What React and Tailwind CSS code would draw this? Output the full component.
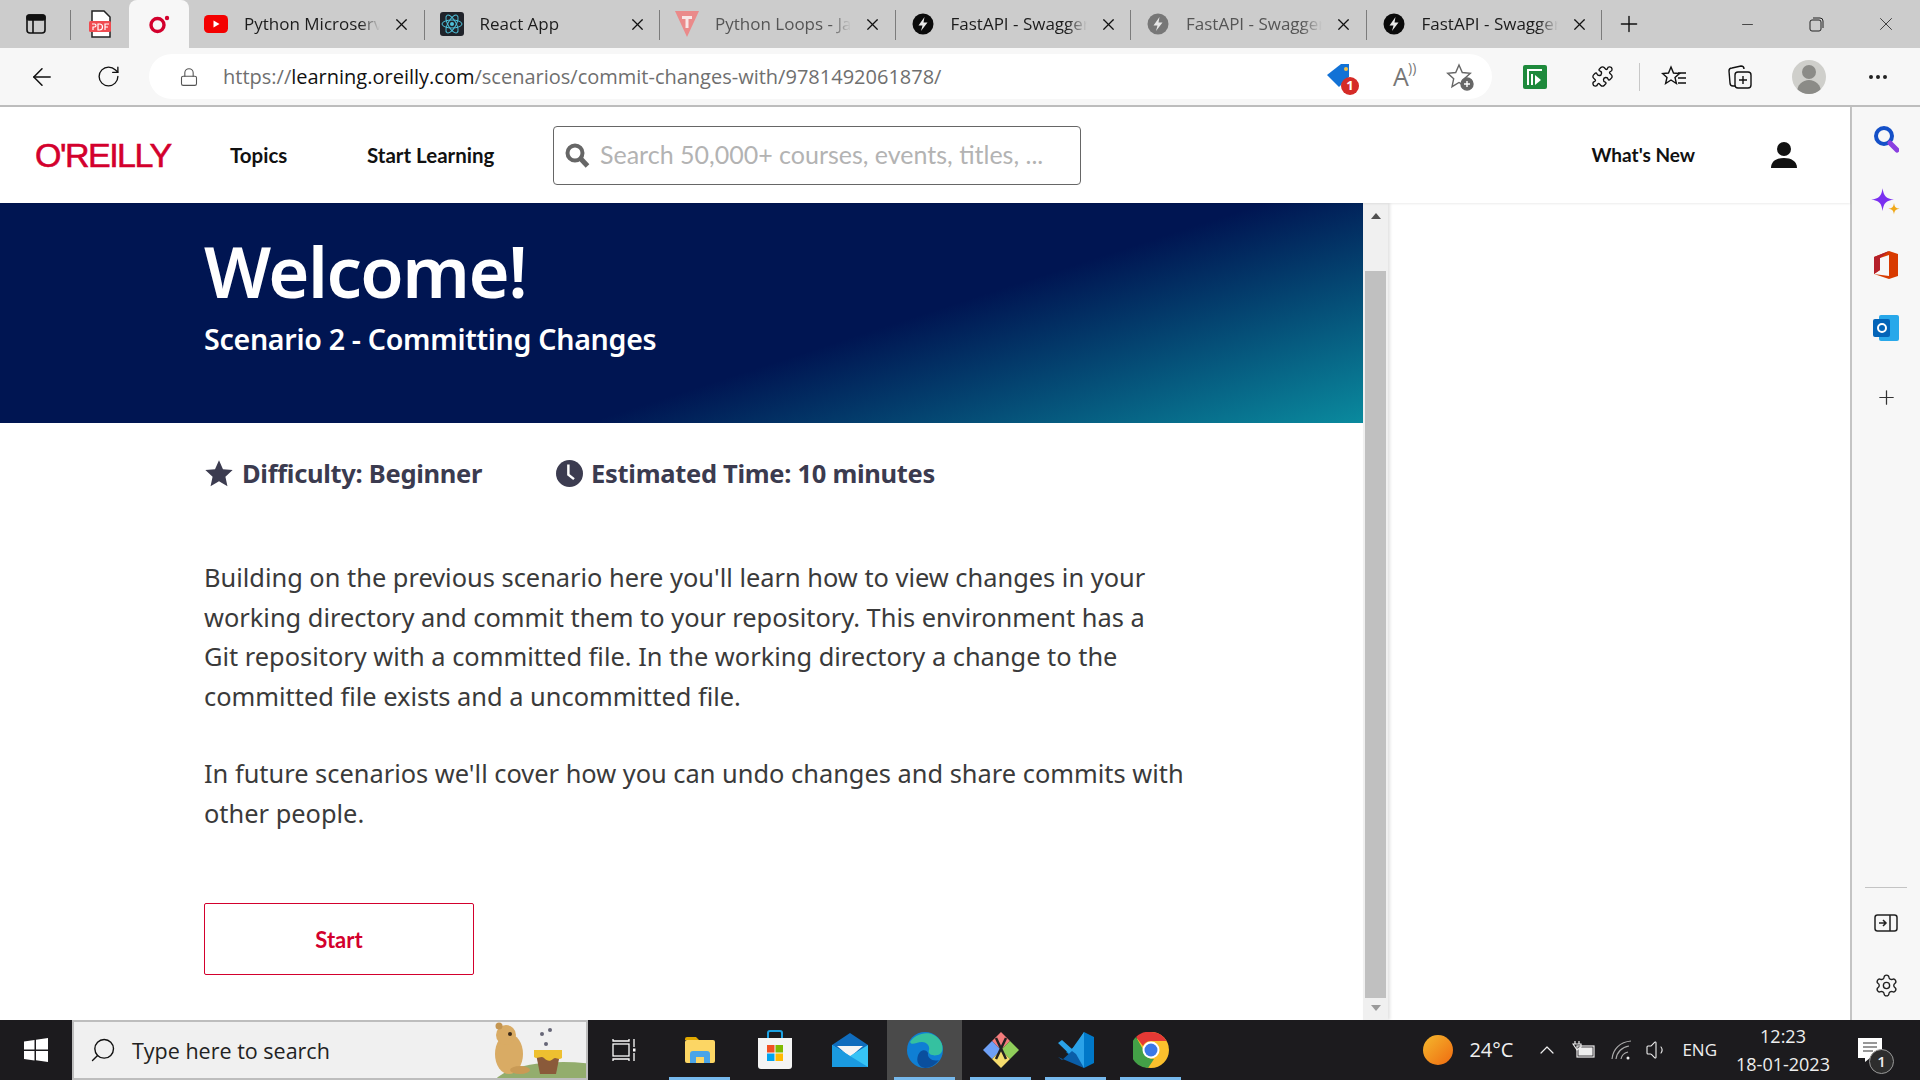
import React from "react";
import { ArrowLeft, RotateCw, Lock, X, Plus, Minus, Puzzle, MoreHorizontal, ChevronUp, Settings, Search, Volume1 } from "lucide-react";

const ui = { fontFamily: '"Open Sans", "Noto Sans", sans-serif' };
const body = { fontFamily: '"Noto Sans", "Open Sans", sans-serif' };
const nav = { fontFamily: 'Lato, "Open Sans", sans-serif' };

function PanelIcon() {
  return (
    <svg width="22" height="22" viewBox="0 0 22 22" fill="none" stroke="#111" strokeWidth="1.6">
      <rect x="2" y="2" width="18" height="18" rx="3" />
      <rect x="2" y="2" width="18" height="5" rx="2" fill="#111" />
      <path d="M8 7v13" />
    </svg>
  );
}

function PdfIcon() {
  return (
    <svg width="24" height="28" viewBox="0 0 24 28">
      <path d="M4 1h12l6 6v20H4z" fill="#fff" stroke="#222" strokeWidth="1.5" />
      <rect x="1" y="11" width="22" height="11" rx="1.5" fill="#f04b50" />
      <path d="M4 14h2.5a1.5 1.5 0 0 1 0 3H5v3M10 14v6h1.5a3 3 0 0 0 0-6zM17 20v-6h4M17 17h3" fill="none" stroke="#fff" strokeWidth="1.2" />
    </svg>
  );
}

function OreillyFav() {
  return (
    <svg width="24" height="24" viewBox="0 0 24 24" fill="none">
      <circle cx="10.5" cy="13" r="6.5" stroke="#d3002d" strokeWidth="3.4" />
      <circle cx="20" cy="6" r="2.2" fill="#d3002d" />
    </svg>
  );
}

function YoutubeFav() {
  return (
    <svg width="24" height="18" viewBox="0 0 24 18">
      <rect width="24" height="18" rx="4.5" fill="#f40000" />
      <path d="M9.5 5.5v7l6-3.5z" fill="#fff" />
    </svg>
  );
}

function ReactFav() {
  return (
    <svg width="24" height="24" viewBox="0 0 24 24" fill="none" stroke="#4fc3dc" strokeWidth="1">
      <rect width="24" height="24" rx="3" fill="#20232a" stroke="none" />
      <ellipse cx="12" cy="12" rx="10" ry="4" />
      <ellipse cx="12" cy="12" rx="10" ry="4" transform="rotate(60 12 12)" />
      <ellipse cx="12" cy="12" rx="10" ry="4" transform="rotate(120 12 12)" />
      <circle cx="12" cy="12" r="2" fill="#4fc3dc" stroke="none" />
    </svg>
  );
}

function TpointFav() {
  return (
    <svg width="24" height="28" viewBox="0 0 24 28">
      <path d="M0 1h24L12 27z" fill="#ea8a8a" />
      <path d="M7 6h10v3h-3.5v9h-3V9H7z" fill="#f8e6e6" />
    </svg>
  );
}

function BoltFav({ color = "#0a0a0a" }) {
  return (
    <svg width="22" height="22" viewBox="0 0 22 22">
      <circle cx="11" cy="11" r="10.5" fill={color} />
      <path d="M12.5 4 6.5 12.5h4L9 18l6.5-8.5h-4z" fill="#e8e8e8" />
    </svg>
  );
}

function Tab({ icon, title, faded }) {
  return (
    <div className="w-[235.5px] h-full flex items-center relative shrink-0">
      <div className="w-[24px] ml-[15px] flex justify-center shrink-0">{icon}</div>
      <div className={`ml-[16px] w-[136px] overflow-hidden whitespace-nowrap text-[17px] ${faded ? "text-[#555]" : "text-[#1c1c1c]"} [mask-image:linear-gradient(to_right,#000_85%,transparent)]`} style={ui}>
        {title}
      </div>
      <X size={19} strokeWidth={1.5} className="ml-[12px] text-[#111] shrink-0" />
      <div className="absolute right-0 top-[10px] w-[1px] h-[30px] bg-[#7c7c7c]" />
    </div>
  );
}

function TabStrip() {
  return (
    <div className="h-[48px] bg-[#cccccc] flex shrink-0">
      <div className="w-[71px] h-full flex items-center pl-[25px] relative">
        <PanelIcon />
        <div className="absolute right-0 top-[10px] w-[1px] h-[30px] bg-[#7c7c7c]" />
      </div>
      <div className="w-[58px] h-full flex items-center justify-center">
        <PdfIcon />
      </div>
      <div className="w-[60px] h-[48px] bg-[#f7f7f7] rounded-t-[8px] flex items-center justify-center z-10">
        <OreillyFav />
      </div>
      <Tab icon={<YoutubeFav />} title="Python Microservices" />
      <Tab icon={<ReactFav />} title="React App" />
      <Tab icon={<TpointFav />} title="Python Loops - Javatpoint" faded />
      <Tab icon={<BoltFav />} title="FastAPI - Swagger UI" />
      <Tab icon={<BoltFav color="#777" />} title="FastAPI - Swagger UI" faded />
      <Tab icon={<BoltFav />} title="FastAPI - Swagger UI" />
      <div className="w-[54px] flex items-center justify-center">
        <Plus size={26} strokeWidth={1.3} className="text-[#111]" />
      </div>
      <div className="flex-1 flex items-center justify-end text-[#222]">
        <div className="w-[69px] flex justify-center"><Minus size={17} strokeWidth={1.1} /></div>
        <div className="w-[69px] flex justify-center">
          <svg width="15" height="15" viewBox="0 0 15 15" fill="none" stroke="#222" strokeWidth="1">
            <rect x="1" y="3" width="11" height="11" rx="2" />
            <path d="M4 1h7a3 3 0 0 1 3 3v7" />
          </svg>
        </div>
        <div className="w-[69px] flex justify-center"><X size={22} strokeWidth={0.9} /></div>
      </div>
    </div>
  );
}

function TagBadge() {
  return (
    <div className="relative w-[30px] h-[30px]">
      <svg width="30" height="30" viewBox="0 0 30 30">
        <path d="M15 2h8v13l-10 10L1 13z" fill="#1272d6" />
        <circle cx="20" cy="7" r="2" fill="#f4c14a" />
      </svg>
      <div className="absolute right-[-3px] bottom-[-3px] w-[18px] h-[18px] rounded-full bg-[#d52b27] text-white text-[13px] font-bold flex items-center justify-center" style={ui}>1</div>
    </div>
  );
}

function ToolIcon({ children, className = "" }) {
  return <div className={`flex items-center justify-center ${className}`}>{children}</div>;
}

function Toolbar() {
  return (
    <div className="h-[57px] bg-[#f7f7f7] flex items-center shrink-0">
      <ToolIcon className="w-[84px]"><ArrowLeft size={28} strokeWidth={1.3} className="text-[#111]" /></ToolIcon>
      <ToolIcon className="w-[48px]"><RotateCw size={25} strokeWidth={1.3} className="text-[#111]" /></ToolIcon>
      <div className="ml-[17px] w-[1343px] h-[45px] bg-white rounded-full flex items-center">
        <Lock size={20} strokeWidth={1.3} className="ml-[30px] text-[#555]" />
        <div className="ml-[24px] text-[20px] text-[#6f6f6f] whitespace-nowrap" style={ui}>
          https://<span className="text-[#111]">learning.oreilly.com</span>/scenarios/commit-changes-with/9781492061878/
        </div>
        <div className="flex-1" />
        <TagBadge />
        <div className="ml-[37px] w-[26px] text-[#777] relative text-[25px] leading-none" style={ui}>
          A
          <span className="absolute left-[15px] top-[-3px] text-[14px]">))</span>
        </div>
        <svg className="ml-[27px] mr-[18px]" width="28" height="28" viewBox="0 0 28 28" fill="none" stroke="#666" strokeWidth="1.4">
          <path d="M13 2l3.3 7.5 8 .8-6 5.4 1.7 8-7-4.2-7 4.2 1.7-8-6-5.4 8-.8z" />
          <circle cx="21" cy="21" r="6" fill="#666" />
          <path d="M21 18v6M18 21h6" stroke="#fff" />
        </svg>
      </div>
      <ToolIcon className="w-[86px]">
        <svg width="24" height="24" viewBox="0 0 24 24">
          <rect width="24" height="24" rx="2" fill="#1e8a3c" />
          <path d="M5 20V5h14M9 20V9" fill="none" stroke="#fff" strokeWidth="2" />
          <path d="M12 10l6 5-6 5z" fill="#fff" />
        </svg>
      </ToolIcon>
      <ToolIcon className="ml-[13px] w-[23px]"><Puzzle size={27} strokeWidth={1.4} className="text-[#111]" /></ToolIcon>
      <div className="ml-[25px] w-[1px] h-[28px] bg-[#c8c8c8]" />
      <ToolIcon className="ml-[16px] w-[36px]">
        <svg width="26" height="26" viewBox="0 0 26 26" fill="none" stroke="#111" strokeWidth="1.4">
          <path d="M10 3l2.5 6 6 .5-4.5 4 1.4 6L10 16l-5.4 3.5 1.4-6-4.5-4 6-.5z" />
          <path d="M17 9h8M17 14h8M17 19h8" />
        </svg>
      </ToolIcon>
      <ToolIcon className="ml-[30px] w-[36px]">
        <svg width="26" height="26" viewBox="0 0 26 26" fill="none" stroke="#111" strokeWidth="1.4">
          <path d="M8 22H6a3 3 0 0 1-3-3L2 7a3 3 0 0 1 3-3l9-2a3 3 0 0 1 3 3" />
          <rect x="8" y="8" width="16" height="16" rx="3" />
          <path d="M16 12v8M12 16h8" />
        </svg>
      </ToolIcon>
      <ToolIcon className="ml-[33px] w-[36px]">
        <div className="w-[34px] h-[34px] rounded-full bg-[#cfcfcb] overflow-hidden flex flex-col items-center">
          <div className="w-[14px] h-[17px] rounded-full bg-[#8b8b87] mt-[5px]" />
          <div className="w-[24px] h-[16px] rounded-t-full bg-[#8b8b87] mt-[1px]" />
        </div>
      </ToolIcon>
      <ToolIcon className="ml-[33px] w-[36px]"><MoreHorizontal size={24} strokeWidth={2} className="text-[#222]" /></ToolIcon>
    </div>
  );
}

function Logo() {
  return (
    <div className="ml-[35px] w-[137px] text-[#d3002d] text-[34px] leading-none tracking-[-1.5px] whitespace-nowrap [-webkit-text-stroke:0.6px_#d3002d]" style={{ fontFamily: '"Liberation Sans", sans-serif' }}>
      O'REILLY
    </div>
  );
}

function SiteHeader() {
  return (
    <div className="h-[96px] bg-white flex items-center shrink-0 shadow-[0_1px_2px_rgba(0,0,0,0.08)] z-10" style={nav}>
      <Logo />
      <div className="ml-[58px] text-[20.5px] font-bold text-[#111] w-[137px]">Topics</div>
      <div className="text-[20.5px] font-bold text-[#111] w-[186px] whitespace-nowrap">Start Learning</div>
      <div className="w-[528px] h-[59px] border border-[#666] rounded-[4px] flex items-center">
        <svg className="ml-[11px]" width="25" height="25" viewBox="0 0 25 25" fill="none" stroke="#666">
          <circle cx="10" cy="10" r="7.5" strokeWidth="4" />
          <path d="M15.5 15.5l7 7.5" strokeWidth="5" />
        </svg>
        <div className="ml-[10px] text-[25px] text-[#b3b3b3] whitespace-nowrap">Search 50,000+ courses, events, titles, ...</div>
      </div>
      <div className="ml-auto text-[19px] font-bold text-[#111] whitespace-nowrap">What's New</div>
      <div className="ml-[75px] mr-[52px]">
        <svg width="28" height="28" viewBox="0 0 28 28" fill="#111">
          <circle cx="14" cy="8" r="7" />
          <path d="M1 27c0-7 6-10 13-10s13 3 13 10z" />
        </svg>
      </div>
    </div>
  );
}

function Scrollbar() {
  return (
    <div className="w-[25px] bg-[#f0f0f0] flex flex-col items-center shrink-0 shadow-[2px_0_3px_rgba(0,0,0,0.12)]">
      <div className="h-[68px] w-full flex justify-center pt-[10px]">
        <div className="w-0 h-0 border-l-[5px] border-r-[5px] border-b-[6px] border-l-transparent border-r-transparent border-b-[#505050]" />
      </div>
      <div className="w-[21px] h-[727px] bg-[#c0c0c0]" />
      <div className="flex-1 w-full flex justify-center pt-[7px]">
        <div className="w-0 h-0 border-l-[5px] border-r-[5px] border-t-[6px] border-l-transparent border-r-transparent border-t-[#9a9a9a]" />
      </div>
    </div>
  );
}

function Scenario() {
  return (
    <div className="w-[1363px] bg-white overflow-hidden shrink-0">
      <div className="h-[220px] pl-[204px] pt-[23px] bg-[linear-gradient(162deg,#001552_62%,#0a8a9e_100%)] text-white" style={body}>
        <h1 className="text-[70.5px] leading-[90px] font-semibold tracking-[-1.5px]">Welcome!</h1>
        <h2 className="text-[28.6px] leading-[40px] font-semibold mt-[3px] tracking-[-0.3px]">Scenario 2 - Committing Changes</h2>
      </div>
      <div className="pl-[204px] text-[#3b3b4f]" style={body}>
        <div className="flex items-center mt-[32px] h-[36px] text-[25.5px] font-bold tracking-[-0.3px]">
          <svg width="30" height="29" viewBox="0 0 24 24" fill="#3c3c50"><path d="M12 1l3.3 7.4 8 .8-6 5.4 1.7 7.9L12 18.5 5 22.5l1.7-7.9-6-5.4 8-.8z" /></svg>
          <span className="ml-[8px]">Difficulty: Beginner</span>
          <svg className="ml-[74px]" width="27" height="27" viewBox="0 0 24 24">
            <circle cx="12" cy="12" r="12" fill="#3c3c50" />
            <path d="M11 4v9l5 4" fill="none" stroke="#fff" strokeWidth="2.2" />
          </svg>
          <span className="ml-[8px]">Estimated Time: 10 minutes</span>
        </div>
        <p className="mt-[67px] text-[25.4px] leading-[39.7px] text-[#3a3a3a]">
          Building on the previous scenario here you'll learn how to view changes in your<br />
          working directory and commit them to your repository. This environment has a<br />
          Git repository with a committed file. In the working directory a change to the<br />
          committed file exists and a uncommitted file.
        </p>
        <p className="mt-[37px] text-[25.4px] leading-[39.7px] text-[#3a3a3a]">
          In future scenarios we'll cover how you can undo changes and share commits with<br />
          other people.
        </p>
        <button className="mt-[70px] w-[270px] h-[72px] border border-[#d3002d] rounded-[2px] text-[#d3002d] text-[22px] font-bold" style={nav}>Start</button>
      </div>
    </div>
  );
}

function SideBar() {
  return (
    <div className="w-[70px] bg-[#f7f7f7] border-l-2 border-[#c4c4c4] flex flex-col items-center shrink-0 pt-[18px]">
      <svg width="26" height="28" viewBox="0 0 26 28" fill="none">
        <circle cx="11" cy="11" r="8" stroke="#1450c8" strokeWidth="4" />
        <path d="M17 18l7 7" stroke="#8a3fe0" strokeWidth="5" strokeLinecap="round" />
      </svg>
      <svg className="mt-[34px]" width="32" height="32" viewBox="0 0 28 28">
        <path d="M11 1c1 7 3 9 10 10-7 1-9 3-10 10-1-7-3-9-10-10 7-1 9-3 10-10z" fill="#7a2ff0" />
        <path d="M21 14c.5 3.5 1.5 4.5 5 5-3.5.5-4.5 1.5-5 5-.5-3.5-1.5-4.5-5-5 3.5-.5 4.500-1.5 5-5z" fill="#f0a818" />
      </svg>
      <svg className="mt-[31px]" width="24" height="30" viewBox="0 0 24 30">
        <path d="M15 1 24 4v22l-9 3-15-5 15 2V5L6 8v12l-6 4V7z" fill="#d83b01" />
        <path d="M15 1 6 8v12l-6 4V7z" fill="#b5202a" />
      </svg>
      <div className="mt-[35px] relative w-[26px] h-[28px]">
        <div className="absolute right-0 top-0 w-[20px] h-[26px] bg-[#28a8ea] rounded-[2px]" />
        <div className="absolute left-0 top-[4px] w-[17px] h-[18px] bg-[#0364b8] rounded-[2px] flex items-center justify-center">
          <div className="w-[10px] h-[10px] rounded-full border-2 border-white" />
        </div>
      </div>
      <Plus size={23} strokeWidth={1.3} className="mt-[43px] text-[#333]" />
      <div className="flex-1" />
      <div className="w-[42px] h-[1px] bg-[#c4c4c4] mb-[26px]" />
      <svg width="24" height="18" viewBox="0 0 24 18" fill="none" stroke="#222" strokeWidth="1.5">
        <rect x="1" y="1" width="22" height="16" rx="2.5" />
        <path d="M16 1v16M5 9h7M9 6l3 3-3 3" />
      </svg>
      <Settings size={25} strokeWidth={1.3} className="mt-[41px] mb-[22px] text-[#222]" />
    </div>
  );
}

function TaskIcon({ children, active, underline = true, className = "" }) {
  return (
    <div className={`w-[75px] h-full relative flex items-center justify-center shrink-0 ${active ? "bg-[#4a4a4a]" : ""} ${className}`}>
      {children}
      {underline && <div className="absolute left-[7px] right-[7px] bottom-0 h-[3px] bg-[#76b9ed]" />}
    </div>
  );
}

function Taskbar() {
  return (
    <div className="h-[60px] bg-[#1c1b1e] flex items-center shrink-0 text-white" style={ui}>
      <div className="w-[72px] h-full flex items-center justify-center">
        <svg width="24" height="24" viewBox="0 0 24 24" fill="#fff">
          <path d="M0 3.5 10.5 2v9.5H0zM12 1.800 24 0v11.5H12zM0 13h10.5v9.5L0 21zM12 13h12v11l-12-1.800z" />
        </svg>
      </div>
      <div className="w-[516px] h-full bg-[#f0f0f0] border-2 border-[#bdbdbd] flex items-center relative overflow-hidden">
        <Search size={28} strokeWidth={1.2} className="ml-[15px] text-[#111] -scale-x-100" />
        <span className="ml-[15px] pt-[2px] text-[21.5px] text-[#222]">Type here to search</span>
        <svg className="absolute right-0 bottom-0" width="118" height="58" viewBox="0 0 118 58">
          <ellipse cx="95" cy="66" rx="70" ry="24" fill="#93ad6d" />
          <ellipse cx="41" cy="34" rx="14" ry="20" fill="#d9ab64" />
          <circle cx="38" cy="15" r="10" fill="#d9ab64" />
          <circle cx="31" cy="6" r="3.5" fill="#c49550" />
          <circle cx="42" cy="14" r="2" fill="#3a2a1a" />
          <ellipse cx="52" cy="50" rx="10" ry="4" fill="#c99a55" />
          <path d="M68 34h24l-4 20H72z" fill="#8a5a3a" />
          <path d="M66 30h28v8c-4 3-6-2-9 1s-6 2-9-1-7 2-10-1z" fill="#eec030" />
          <circle cx="82" cy="10" r="2" fill="#667" />
          <circle cx="74" cy="14" r="2" fill="#667" />
          <circle cx="78" cy="24" r="2" fill="#667" />
        </svg>
      </div>
      <div className="w-[72px] h-full flex items-center justify-center">
        <svg width="24" height="24" viewBox="0 0 24 24" fill="none" stroke="#fff" strokeWidth="1.3">
          <rect x="1" y="6" width="16" height="12" />
          <path d="M1 1v2h16V1M1 23v-2h16v2M22 1v8M22 15v8" />
          <rect x="21" y="10.5" width="2.5" height="3" fill="#fff" stroke="none" />
        </svg>
      </div>
      <div className="ml-[2px]" />
      <TaskIcon>
        <svg width="32" height="28" viewBox="0 0 32 28">
          <path d="M1 3a2 2 0 0 1 2-2h9l3 3h-14z" fill="#e0a800" />
          <rect x="1" y="4" width="30" height="23" rx="2" fill="#fcd664" />
          <path d="M6 27v-9a3 3 0 0 1 3-3h14a3 3 0 0 1 3 3v9h-6v-6h-8v6z" fill="#4aa4e8" />
        </svg>
      </TaskIcon>
      <TaskIcon underline={false}>
        <svg width="36" height="40" viewBox="0 0 36 40">
          <path d="M11 8V3a2 2 0 0 1 2-2h10a2 2 0 0 1 2 2v5" fill="none" stroke="#1ba1e2" strokeWidth="2" />
          <path d="M1 8h34v28a3 3 0 0 1-3 3H4a3 3 0 0 1-3-3z" fill="#f4f4f4" />
          <rect x="10" y="15" width="7.5" height="7.5" fill="#f25022" />
          <rect x="18.5" y="15" width="7.5" height="7.5" fill="#7fba00" />
          <rect x="10" y="23.5" width="7.5" height="7.5" fill="#00a4ef" />
          <rect x="18.5" y="23.5" width="7.5" height="7.5" fill="#ffb900" />
        </svg>
      </TaskIcon>
      <TaskIcon underline={false}>
        <svg width="36" height="34" viewBox="0 0 36 34">
          <path d="M0 12 18 0l18 12v22H0z" fill="#0f6cbd" />
          <path d="M5 13h26L18 24z" fill="#f4f4f4" />
          <path d="M0 12l18 11 18-11v22H0z" fill="#36c3f5" />
          <path d="M0 12 36 34H0z" fill="#1a9ae0" />
        </svg>
      </TaskIcon>
      <TaskIcon active>
        <svg width="36" height="36" viewBox="0 0 36 36">
          <circle cx="18" cy="18" r="18" fill="#0f7fd4" />
          <path d="M3 10C8 1 24-3 32 7c5 6 4 13 1 15-5 3-13 1-11-4 1-4-2-8-7-8-6 0-10 4-12 0z" fill="#35c1a0" />
          <path d="M18 36C10 35 8 26 13 20c3-3 7-2 8 1-1 5 5 9 11 7-3 4-8 8-14 8z" fill="#0a4f9e" />
        </svg>
      </TaskIcon>
      <TaskIcon className="ml-[1px]">
        <svg width="36" height="36" viewBox="0 0 36 36">
          <path d="M18 0 27 9 18 18 9 9z" fill="#f47c7c" />
          <path d="M27 9l9 9-9 9-9-9z" fill="#8fce5a" />
          <path d="M9 9l9 9-9 9-9-9z" fill="#6ea0f5" />
          <path d="M18 18l9 9-9 9-9-9z" fill="#f6dd6e" />
          <path d="M13 6l10 21M23 6 13 27" stroke="#222" strokeWidth="2.5" />
        </svg>
      </TaskIcon>
      <TaskIcon>
        <svg width="36" height="38" viewBox="0 0 36 38">
          <path d="M26 1 36 6v26l-10 5L8 21l10-6z" fill="#0078c8" />
          <path d="M26 1v36L0 12l4-3 10 9z" fill="#2aa2e8" />
          <path d="M26 37 0 26l4 3 10-9 4 3z" fill="#0a5ea8" />
        </svg>
      </TaskIcon>
      <TaskIcon>
        <svg width="36" height="36" viewBox="0 0 36 36">
          <circle cx="18" cy="18" r="18" fill="#fbc02d" />
          <path d="M18 0a18 18 0 0 1 15.6 9H18a9 9 0 0 0-8 5L3 5A18 18 0 0 1 18 0z" fill="#e53935" />
          <path d="M3 5l8 14a9 9 0 0 0 10 8l-6 9A18 18 0 0 1 3 5z" fill="#43a047" />
          <circle cx="18" cy="18" r="8.5" fill="#fff" />
          <circle cx="18" cy="18" r="6.5" fill="#3b78e7" />
        </svg>
      </TaskIcon>
      <div className="flex-1" />
      <div className="w-[30px] h-[30px] rounded-full bg-[linear-gradient(135deg,#f4b92e,#f06a10)] shrink-0" />
      <span className="ml-[16px] text-[20px] text-[#f0f0f0] w-[42px] whitespace-nowrap">24°C</span>
      <ChevronUp size={24} strokeWidth={1.2} className="ml-[24px] text-[#eee]" />
      <svg className="ml-[13px]" width="24" height="18" viewBox="0 0 24 18" fill="none" stroke="#eee" strokeWidth="1.2">
        <rect x="5" y="5" width="17" height="11" />
        <rect x="7" y="7" width="13" height="7" fill="#eee" />
        <path d="M3 0v3M7 0v3M1 3h8v3L5 9z" />
      </svg>
      <svg className="ml-[15px]" width="22" height="20" viewBox="0 0 22 20" fill="none" stroke="#aaa" strokeWidth="1.2">
        <path d="M1 19C2 9 9 2 20 1M5 19c1-7 6-12 13-13M10 19c.5-3 3-6 7-7" />
        <circle cx="17" cy="18" r="1.5" fill="#eee" stroke="none" />
      </svg>
      <Volume1 size={24} strokeWidth={1.1} className="ml-[12px] text-[#eee]" />
      <span className="ml-[13px] text-[17px] text-[#eee]">ENG</span>
      <div className="ml-[17px] w-[98px] text-center text-[18px] leading-[28px] text-[#eee] whitespace-nowrap">
        <div>12:23</div>
        <div>18-01-2023</div>
      </div>
      <div className="ml-[26px] mr-[38px] relative w-[24px] h-[24px]">
        <svg width="24" height="24" viewBox="0 0 24 24" fill="#fff">
          <path d="M0 0h24v20H12l-5 4v-4H0z" />
          <path d="M5 5h14M5 9h14M5 13h10" stroke="#333" strokeWidth="1.2" />
        </svg>
        <div className="absolute left-[11px] top-[11px] w-[25px] h-[25px] rounded-full bg-[#2d2d2d] border border-[#999] text-[#eee] text-[15px] font-semibold flex items-center justify-center">1</div>
      </div>
    </div>
  );
}

export default function App() {
  return (
    <div className="w-[1920px] h-[1080px] flex flex-col overflow-hidden bg-white">
      <TabStrip />
      <Toolbar />
      <div className="h-[2px] bg-[#bdbdbd] shrink-0" />
      <div className="flex-1 flex min-h-0">
        <div className="w-[1850px] flex flex-col min-h-0">
          <SiteHeader />
          <div className="flex-1 flex min-h-0">
            <Scenario />
            <Scrollbar />
          </div>
        </div>
        <SideBar />
      </div>
      <Taskbar />
    </div>
  );
}
